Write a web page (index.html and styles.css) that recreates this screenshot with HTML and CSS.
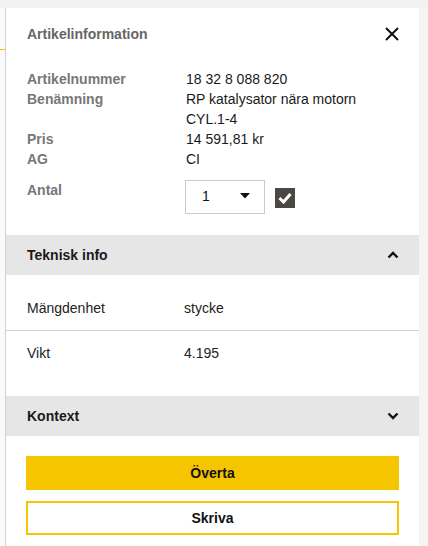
FILE: index.html
```html
<!DOCTYPE html>
<html lang="sv">
<head>
<meta charset="utf-8">
<link rel="stylesheet" href="styles.css">
</head>
<body>
<div class="top-band"></div>
<div class="layout">
  <div class="left-strip"><span class="yellow-mark"></span></div>
  <div class="panel">
    <div class="panel-head">
      <span class="panel-title">Artikelinformation</span>
      <svg class="close" width="16" height="16" viewBox="0 0 16 16"><path d="M2 2 L14 14 M14 2 L2 14" stroke="#111" stroke-width="2" fill="none"/></svg>
    </div>
    <div class="info">
      <div class="lbl">Artikelnummer</div><div class="val">18 32 8 088 820</div>
      <div class="lbl">Benämning</div><div class="val">RP katalysator nära motorn<br>CYL.1-4</div>
      <div class="lbl">Pris</div><div class="val">14 591,81 kr</div>
      <div class="lbl">AG</div><div class="val">CI</div>
    </div>
    <div class="antal">
      <div class="lbl">Antal</div>
      <div class="antal-ctrl">
        <div class="select"><span>1</span><svg width="10" height="6" viewBox="0 0 10 6"><path d="M0 0 H10 L5 5.5 Z" fill="#111"/></svg></div>
        <div class="check"><svg width="14" height="12" viewBox="0 0 14 12"><path d="M1.5 6 L5.5 10 L12.5 2" stroke="#fff" stroke-width="3" fill="none"/></svg></div>
      </div>
    </div>
    <div class="sec-head sec-tech">
      <span>Teknisk info</span>
      <svg width="12" height="8" viewBox="0 0 12 8"><path d="M1.5 6.5 L6 2 L10.5 6.5" stroke="#111" stroke-width="2.4" fill="none"/></svg>
    </div>
    <div class="tech">
      <div class="tech-row"><span class="tl">Mängdenhet</span><span>stycke</span></div>
      <div class="tech-row"><span class="tl">Vikt</span><span>4.195</span></div>
    </div>
    <div class="sec-head">
      <span>Kontext</span>
      <svg width="12" height="8" viewBox="0 0 12 8"><path d="M1.5 1.5 L6 6 L10.5 1.5" stroke="#111" stroke-width="2.4" fill="none"/></svg>
    </div>
    <div class="actions">
      <button class="btn primary">Överta</button>
      <button class="btn secondary">Skriva</button>
    </div>
  </div>
  <div class="right-strip"></div>
</div>
</body>
</html>
```

FILE: styles.css
```css
html, body {
  margin: 0;
  padding: 0;
}
body {
  background: #f2f2f2;
  font-family: "Liberation Sans", Arial, sans-serif;
  font-size: 14px;
  color: #222;
  width: 428px;
  height: 546px;
  overflow: hidden;
}
.top-band {
  height: 8px;
  background: #f2f2f2;
}
.layout {
  display: flex;
  height: 538px;
}
.left-strip {
  width: 5px;
  background: #fafafa;
  position: relative;
}
.yellow-mark {
  position: absolute;
  left: 0;
  top: 41px;
  width: 5px;
  height: 1px;
  background: #f3c300;
}
.panel {
  width: 413px;
  background: #fff;
  border-left: 1px solid #cfcfcf;
  display: flex;
  flex-direction: column;
}
.right-strip {
  flex: 1;
  background: #f4f4f4;
}
.panel-head {
  display: flex;
  justify-content: space-between;
  align-items: center;
  padding: 16px 19px 0 21px;
  height: 20px;
}
.panel-title {
  font-weight: bold;
  color: #666;
  line-height: 20px;
}
.close {
  display: block;
}
.info {
  display: grid;
  grid-template-columns: 159px 1fr;
  line-height: 20px;
  padding: 25px 21px 0 21px;
}
.lbl {
  font-weight: bold;
  color: #777;
  line-height: 20px;
}
.val {
  color: #1a1a1a;
}
.antal {
  display: grid;
  grid-template-columns: 158px 1fr;
  padding: 11px 21px 0 21px;
}
.antal-ctrl {
  display: flex;
  align-items: center;
  gap: 10px;
}
.select {
  box-sizing: border-box;
  width: 80px;
  height: 34px;
  border: 1px solid #ccc;
  display: flex;
  align-items: center;
  justify-content: space-between;
  padding: 0 14px 2px 16px;
  color: #111;
}
.select span {
  line-height: 20px;
}
.select svg {
  display: block;
}
.check {
  width: 20px;
  height: 20px;
  background: #4b4843;
  display: flex;
  align-items: center;
  justify-content: center;
  margin-top: 2px;
}
.sec-head {
  height: 40px;
  background: #e6e6e6;
  display: flex;
  align-items: center;
  justify-content: space-between;
  padding: 0 20px 0 21px;
  font-weight: bold;
  color: #1a1a1a;
}
.sec-head svg {
  display: block;
}
.sec-tech {
  margin-top: 21px;
}
.tech {
  padding: 11px 0 21px 0;
}
.tech-row {
  display: flex;
  align-items: center;
  height: 44px;
  padding-left: 21px;
  color: #222;
}
.tech-row + .tech-row {
  border-top: 1px solid #d0d0d0;
}
.tl {
  width: 157px;
}
.actions {
  display: flex;
  flex-direction: column;
  gap: 11px;
  padding: 20px 20px 0 20px;
}
.btn {
  height: 34px;
  font-family: "Liberation Sans", Arial, sans-serif;
  font-size: 14px;
  font-weight: bold;
  color: #111;
  border: 2px solid #f5c500;
  margin: 0;
}
.primary {
  background: #f5c500;
}
.secondary {
  background: #fff;
}
```
